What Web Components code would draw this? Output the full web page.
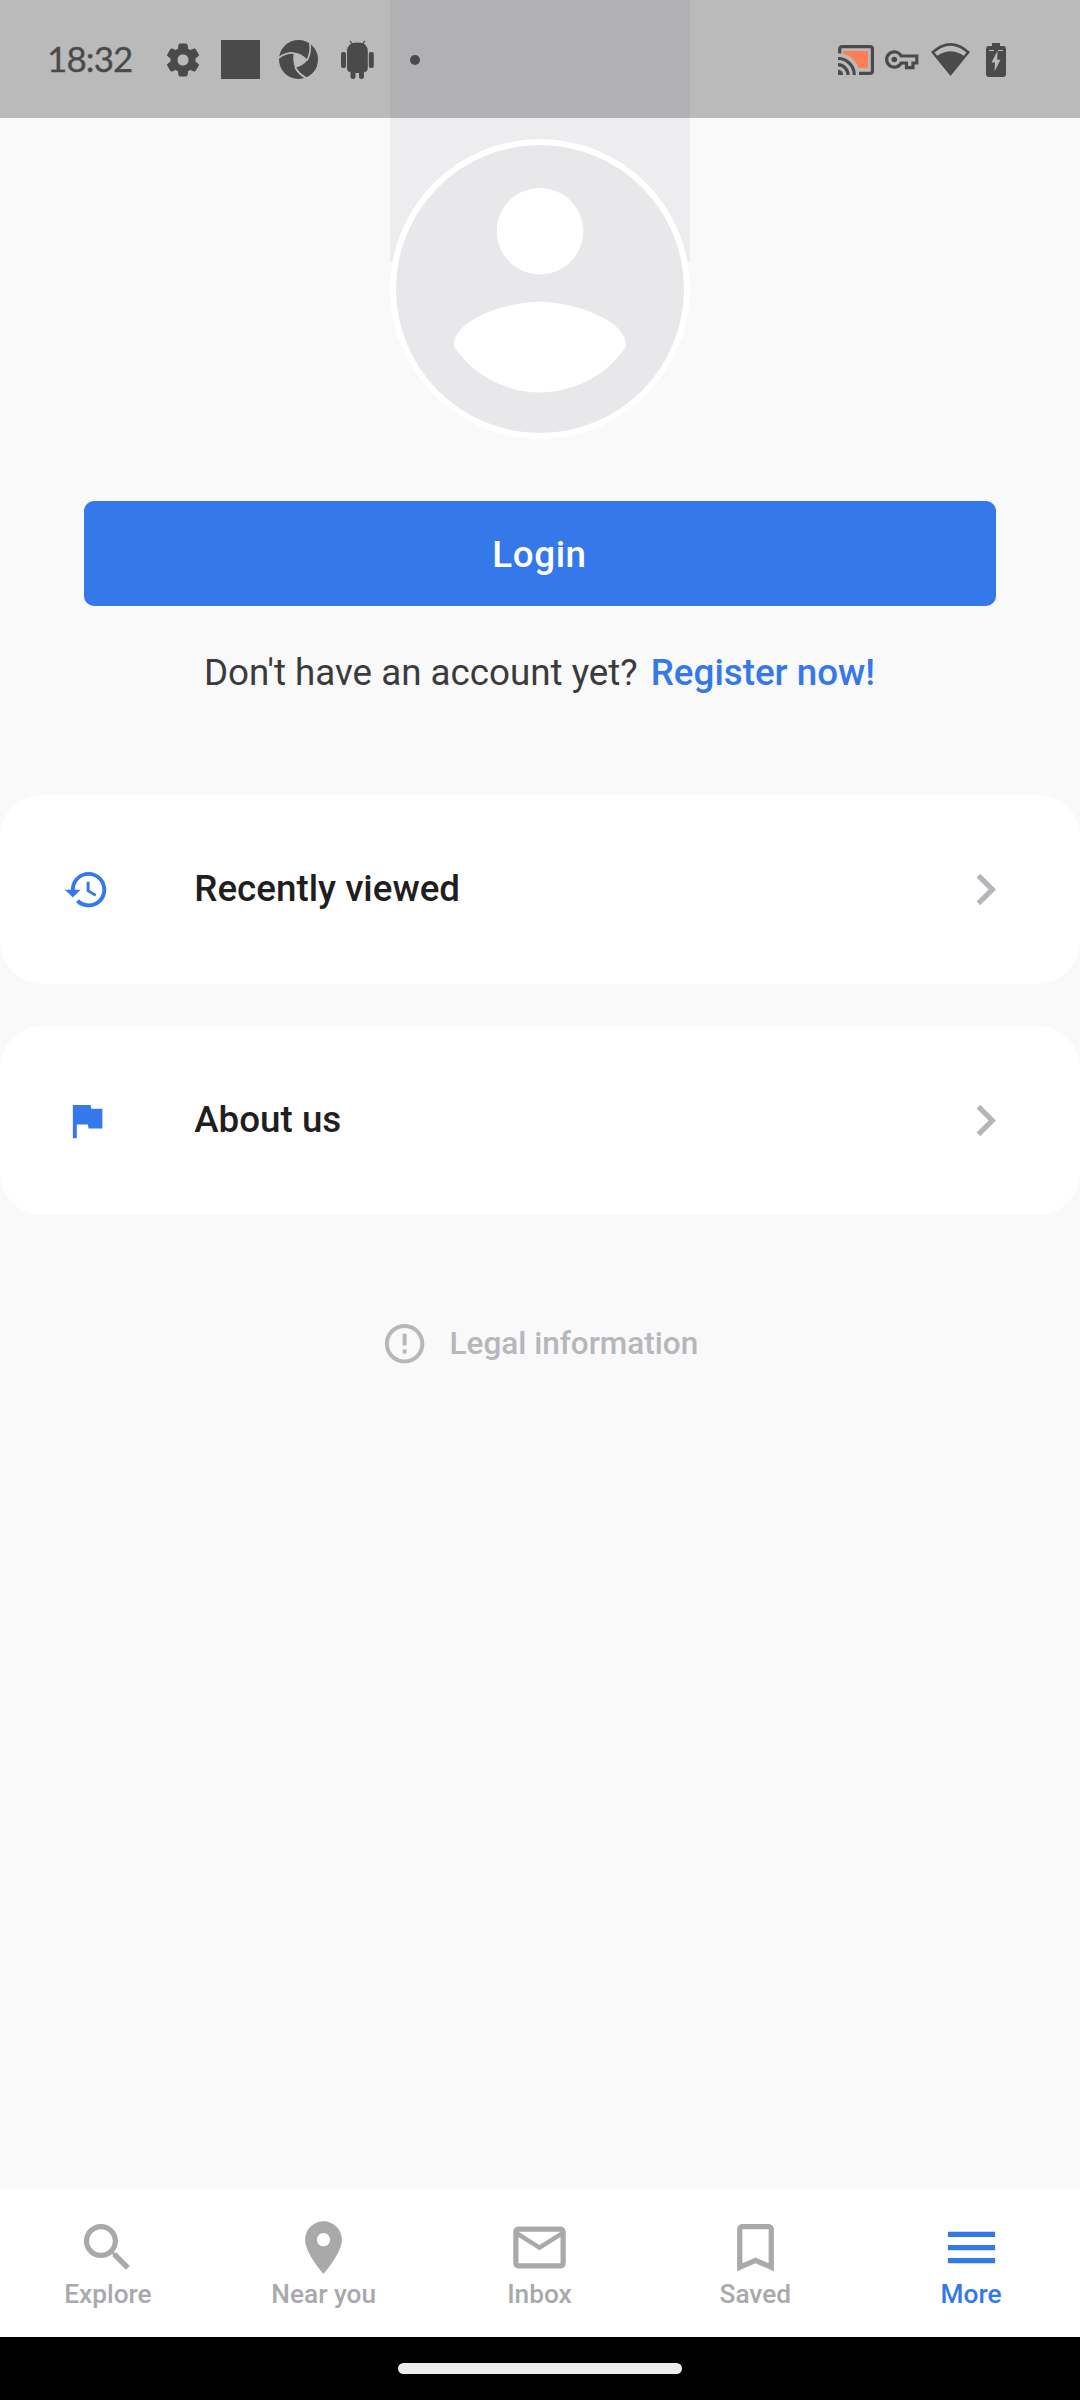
<!DOCTYPE html>
<html lang="en">
<head>
<meta charset="utf-8">
<meta name="viewport" content="width=device-width">
<title>More</title>
<style>
    html, body {
        margin: 0;
        padding: 0;
    }
    body {
        background: #f9f9f9;
        font-family: Roboto, "Liberation Sans", sans-serif;
    }
</style>
</head>
<body>
<more-screen></more-screen>

<script>
const ICONS = {
    history: '<path d="M13 3c-4.97 0-9 4.03-9 9H1l3.89 3.89.07.14L9 12H6c0-3.87 3.13-7 7-7s7 3.13 7 7-3.13 7-7 7c-1.93 0-3.68-.79-4.94-2.06l-1.42 1.42C8.27 19.99 10.51 21 13 21c4.97 0 9-4.03 9-9s-4.03-9-9-9zm-1 5v5l4.28 2.54.72-1.21-3.5-2.08V8H12z"/>',
    flag: '<path d="M14.4 6L14 4H5v17h2v-7h5.6l.4 2h7V6z"/>',
    chevron: '<path d="M10 6L8.59 7.41 13.17 12l-4.58 4.59L10 18l6-6z"/>',
    info: '<path d="M11 15h2v2h-2zm0-8h2v6h-2zm.99-5C6.47 2 2 6.48 2 12s4.47 10 9.99 10C17.52 22 22 17.52 22 12S17.52 2 11.99 2zM12 20c-4.42 0-8-3.58-8-8s3.58-8 8-8 8 3.58 8 8-3.58 8-8 8z"/>',
    search: '<path d="M15.5 14h-.79l-.28-.27C15.41 12.59 16 11.11 16 9.5 16 5.91 13.09 3 9.5 3S3 5.91 3 9.5 5.91 16 9.5 16c1.61 0 3.09-.59 4.23-1.57l.27.28v.79l5 4.99L20.49 19l-4.99-5zm-6 0C7.01 14 5 11.99 5 9.5S7.01 5 9.5 5 14 7.01 14 9.5 11.99 14 9.5 14z"/>',
    place: '<path d="M12 2C8.13 2 5 5.13 5 9c0 5.25 7 13 7 13s7-7.75 7-13c0-3.87-3.13-7-7-7zm0 9.5c-1.38 0-2.5-1.12-2.5-2.5s1.12-2.5 2.5-2.5 2.5 1.12 2.5 2.5-1.12 2.5-2.5 2.5z"/>',
    mail: '<path d="M22 6c0-1.1-.9-2-2-2H4c-1.1 0-2 .9-2 2v12c0 1.1.9 2 2 2h16c1.1 0 2-.9 2-2V6zm-2 0l-8 5-8-5h16zm0 12H4V8l8 5 8-5v10z"/>',
    bookmark: '<path d="M17 3H7c-1.1 0-1.99.9-1.99 2L5 21l7-3 7 3V5c0-1.1-.9-2-2-2zm0 15l-5-2.18L7 18V5h10v13z"/>',
    menu: '<path d="M3 18h18v-2H3v2zm0-5h18v-2H3v2zm0-7v2h18V6H3z"/>',
    settings: '<path stroke="currentColor" stroke-width=".6" d="M19.14 12.94c.04-.3.06-.61.06-.94 0-.32-.02-.64-.07-.94l2.03-1.58c.18-.14.23-.41.12-.61l-1.92-3.32c-.12-.22-.37-.29-.59-.22l-2.39.96c-.5-.38-1.03-.7-1.62-.94l-.36-2.54c-.04-.24-.24-.41-.48-.41h-3.84c-.24 0-.43.17-.47.41l-.36 2.54c-.59.24-1.13.57-1.62.94l-2.39-.96c-.22-.08-.47 0-.59.22L2.74 8.87c-.12.21-.08.47.12.61l2.03 1.58c-.05.3-.09.63-.09.94s.02.64.07.94l-2.03 1.58c-.18.14-.23.41-.12.61l1.92 3.32c.12.22.37.29.59.22l2.39-.96c.5.38 1.03.7 1.62.94l.36 2.54c.05.24.24.41.48.41h3.84c.24 0 .44-.17.47-.41l.36-2.54c.59-.24 1.13-.56 1.62-.94l2.39.96c.22.08.47 0 .59-.22l1.92-3.32c.12-.22.07-.47-.12-.61l-2.01-1.58zM12 15.6c-1.98 0-3.6-1.62-3.6-3.6s1.62-3.6 3.6-3.6 3.6 1.62 3.6 3.6-1.62 3.6-3.6 3.6z"/>'
};

class AppIcon extends HTMLElement {
    constructor() {
        super();
        this.attachShadow({ mode: 'open' });
    }

    connectedCallback() {
        this.shadowRoot.innerHTML = `
            <style>
                :host { display: block; flex: none; width: var(--icon-size, 63px); height: var(--icon-size, 63px); }
                svg { display: block; width: 100%; height: 100%; fill: currentColor; }
            </style>
            <svg viewBox="0 0 24 24">${ICONS[this.getAttribute('name')] || ''}</svg>
        `;
    }
}

class StatusBar extends HTMLElement {
    constructor() {
        super();
        this.attachShadow({ mode: 'open' });
        this.shadowRoot.innerHTML = `
            <style>
                :host {
                    display: flex;
                    justify-content: space-between;
                    align-items: center;
                    box-sizing: border-box;
                    height: 118px;
                    padding: 1px 74px 0 47px;
                    background: rgba(0, 0, 0, .25);
                    color: #4a4a4a;
                }
                .group { display: flex; align-items: center; }
                .time { width: 116px; padding-bottom: 3px; font: 400 35px/42px Lato, Roboto, sans-serif; letter-spacing: -.9px; white-space: nowrap; -webkit-text-stroke: .3px currentColor; }
                svg { display: block; fill: currentColor; }
                app-icon { --icon-size: 40px; }
                .square { width: 39px; height: 39px; margin: 0 19px 0 18px; background: currentColor; }
                .droid { margin: 0 36px 0 23px; }
                .dot { width: 10px; height: 10px; border-radius: 50%; background: currentColor; }
            </style>
            <div class="group">
                <span class="time">18:32</span>
                <app-icon name="settings"></app-icon>
                <div class="square"></div>
                <svg width="39" height="39" viewBox="0 0 39 39">
                    <circle cx="19.5" cy="19.5" r="19.5"/>
                    <g fill="none" stroke="#bbb" stroke-width="1.7">
                        <path d="M-1 18.5Q6 12.5 15 13"/>
                        <path d="M30.8 3Q32.5 12 28 20.5"/>
                        <path d="M16 27Q20 35 30 39.5"/>
                    </g>
                    <path fill="#bbb" d="M14.8 12.6Q23 13.5 28.6 20Q23.5 26.5 16 27.5Q13.2 20 14.8 12.6z"/>
                    <path fill="#bbb" d="M26 40l3-2.6 10-7v9z"/>
                    <path d="M28 36Q36 32.5 38.2 25L37 24 26 34z"/>
                </svg>
                <svg class="droid" width="33" height="39" viewBox="0 0 33 39">
                    <path d="M6 11.5Q6 2.5 16.4 2.5T26.8 11.5V28Q26.8 32 23 32V37Q23 39 20.5 39T18 37V33H14.5V37Q14.5 39 12 39T9.5 37V32Q6 32 6 28z"/>
                    <rect x="0" y="12" width="5" height="16" rx="2"/>
                    <rect x="27.8" y="12" width="5" height="16" rx="2"/>
                    <path fill="none" stroke="currentColor" stroke-width="1.2" d="M9 .8l3 4M24 .8l-3 4"/>
                </svg>
                <div class="dot"></div>
            </div>
            <div class="group">
                <svg width="36" height="30" viewBox="0 0 36 30">
                    <path fill="#ff7d55" d="M5 6H30V23H20.5Q17 12 5 8.5z"/>
                    <g fill="none" stroke="currentColor" stroke-width="3.2">
                        <path d="M1.7 8.5V4Q1.7 1.7 4 1.7H32Q34.4 1.7 34.4 4V26Q34.4 28.3 32 28.3H21"/>
                        <path d="M0 13.5A16.4 16.4 0 0 1 16.3 30"/>
                        <path d="M0 19.7A10.3 10.3 0 0 1 10 30"/>
                    </g>
                    <path d="M0 24.5A5.5 5.5 0 0 1 5.2 30H0z"/>
                </svg>
                <svg style="margin: 0 12px 0 11px" width="34" height="20" viewBox="0 0 34 20">
                    <path fill="none" stroke="currentColor" stroke-width="3.2" d="M16.2 6A7.7 7.7 0 1 0 16.2 13H21.5V17.6H28V13H31.8V6z"/>
                    <circle cx="9.3" cy="9.5" r="2.8"/>
                </svg>
                <svg width="39" height="33" viewBox="0 0 39 33">
                    <path d="M0 9Q19.5-9 39 9L19.5 33z"/>
                    <path fill="#bbb" d="M3.5 9.5Q19.5-3.8 35.5 9.5L32.8 12.8Q19.5 3.8 6.2 12.8z"/>
                </svg>
                <svg style="margin-left: 16px" width="20" height="34" viewBox="0 0 20 34">
                    <path d="M6 0h8v3h3q3 0 3 3v25q0 3-3 3H3q-3 0-3-3V6q0-3 3-3h3z"/>
                    <path fill="#bbb" d="M3 7h5v1H3zm9 0h5v1h-5zM11.5 8L5.5 19.5h3.5L8.5 28.5 14.5 16.8h-3.3z"/>
                </svg>
            </div>
        `;
    }
}

class ProfileAvatar extends HTMLElement {
    constructor() {
        super();
        this.attachShadow({ mode: 'open' });
        this.shadowRoot.innerHTML = `
            <style>
                :host { display: block; width: 300px; height: 439px; margin: 0 auto; }
                /* tinted strip behind the upper half of the circle */
                .strip {
                    display: flex;
                    align-items: flex-end;
                    box-sizing: border-box;
                    height: 289px;
                    background: linear-gradient(#ededef, #ededef) top / 100% 262px no-repeat;
                }
                svg { display: block; flex: none; margin-bottom: -150px; }
            </style>
            <div class="strip">
                <svg width="300" height="300" viewBox="0 0 300 300">
                    <circle cx="150" cy="150" r="150" fill="#fff"/>
                    <circle cx="150" cy="150" r="144" fill="#e8e8ea"/>
                    <path fill="#fff" transform="translate(-22.8 -23) scale(14.4)" d="M12 5c1.66 0 3 1.34 3 3s-1.34 3-3 3-3-1.34-3-3 1.34-3 3-3zm0 14.2c-2.5 0-4.71-1.28-6-3.22.03-1.99 4-3.08 6-3.08 1.99 0 5.97 1.09 6 3.08-1.29 1.94-3.5 3.22-6 3.22z"/>
                </svg>
            </div>
        `;
    }
}

class LoginPanel extends HTMLElement {
    constructor() {
        super();
        this.attachShadow({ mode: 'open' });
        this.shadowRoot.innerHTML = `
            <style>
                :host { display: block; padding: 62px 84px 0; font-size: 36.75px; line-height: 44px; }
                button {
                    display: block;
                    width: 100%;
                    height: 105px;
                    padding: 2px 1px 0 0;
                    border: 0;
                    border-radius: 10px;
                    background: #3478ea;
                    color: #fff;
                    font: inherit;
                    font-weight: 500;
                    letter-spacing: .6px;
                }
                p {
                    display: flex;
                    justify-content: center;
                    gap: 13px;
                    margin: 45px 1px 0 0;
                    color: #3b3b3d;
                    white-space: nowrap;
                }
                a { color: #3478ea; font-weight: 500; }
            </style>
            <button>Login</button>
            <p><span>Don't have an account yet?</span><a>Register now!</a></p>
        `;
    }
}

class MenuRow extends HTMLElement {
    constructor() {
        super();
        this.attachShadow({ mode: 'open' });
    }

    connectedCallback() {
        this.shadowRoot.innerHTML = `
            <style>
                :host {
                    display: flex;
                    align-items: center;
                    box-sizing: border-box;
                    height: 189px;
                    padding: 0 63px;
                    border-radius: 42px;
                    background: #fff;
                    color: #1f1f21;
                    font-size: 36.75px;
                    font-weight: 500;
                    line-height: 44px;
                }
                .lead { --icon-size: 47.25px; margin-top: 1px; color: #3478ea; }
                .label { flex: 1; margin-left: 84px; }
                .arrow { color: #b5b5ba; }
            </style>
            <app-icon class="lead" name="${this.getAttribute('icon')}"></app-icon>
            <div class="label"><slot></slot></div>
            <app-icon class="arrow" name="chevron"></app-icon>
        `;
    }
}

class LegalLink extends HTMLElement {
    constructor() {
        super();
        this.attachShadow({ mode: 'open' });
        this.shadowRoot.innerHTML = `
            <style>
                :host {
                    display: flex;
                    justify-content: center;
                    align-items: center;
                    gap: 21.5px;
                    padding-right: 1px;
                    color: #b6b6bb;
                    font-size: 31.5px;
                    font-weight: 500;
                    line-height: 38px;
                }
                app-icon { --icon-size: 47.25px; }
                span { padding-top: 1px; }
            </style>
            <app-icon name="info"></app-icon>
            <span><slot></slot></span>
        `;
    }
}

class NavItem extends HTMLElement {
    constructor() {
        super();
        this.attachShadow({ mode: 'open' });
    }

    connectedCallback() {
        this.shadowRoot.innerHTML = `
            <style>
                :host {
                    display: flex;
                    flex-direction: column;
                    align-items: center;
                    padding-top: 26px;
                    color: #a9a9ac;
                    font-size: 26.25px;
                    font-weight: 500;
                    line-height: 30px;
                }
                :host([active]) { color: #3478ea; }
            </style>
            <app-icon name="${this.getAttribute('icon')}"></app-icon>
            <span><slot></slot></span>
        `;
    }
}

class BottomNav extends HTMLElement {
    constructor() {
        super();
        this.attachShadow({ mode: 'open' });
        this.shadowRoot.innerHTML = `
            <style>
                :host { display: block; }
                nav { display: grid; grid-template-columns: repeat(5, 1fr); box-sizing: border-box; height: 147px; padding-right: 1px; background: #fff; }
                .gesture { display: flex; justify-content: center; align-items: flex-start; box-sizing: border-box; height: 63px; padding-top: 26px; background: #000; }
                .pill { width: 284px; height: 11px; border-radius: 6px; background: #ececec; }
            </style>
            <nav><slot></slot></nav>
            <div class="gesture"><div class="pill"></div></div>
        `;
    }
}

class MoreScreen extends HTMLElement {
    constructor() {
        super();
        this.attachShadow({ mode: 'open' });
        this.shadowRoot.innerHTML = `
            <style>
                :host {
                    position: relative;
                    display: flex;
                    flex-direction: column;
                    width: 1080px;
                    height: 2400px;
                    overflow: hidden;
                    background: #f9f9f9;
                }
                status-bar { position: absolute; top: 0; left: 0; right: 0; }
                main { flex: 1; }
                .rows { display: flex; flex-direction: column; gap: 42px; margin-top: 99.5px; }
                legal-link { margin-top: 105px; }
            </style>
            <main>
                <profile-avatar></profile-avatar>
                <login-panel></login-panel>
                <div class="rows">
                    <menu-row icon="history">Recently viewed</menu-row>
                    <menu-row icon="flag">About us</menu-row>
                </div>
                <legal-link>Legal information</legal-link>
            </main>
            <bottom-nav>
                <nav-item icon="search">Explore</nav-item>
                <nav-item icon="place">Near you</nav-item>
                <nav-item icon="mail">Inbox</nav-item>
                <nav-item icon="bookmark">Saved</nav-item>
                <nav-item icon="menu" active>More</nav-item>
            </bottom-nav>
            <status-bar></status-bar>
        `;
    }
}

customElements.define('app-icon', AppIcon);
customElements.define('status-bar', StatusBar);
customElements.define('profile-avatar', ProfileAvatar);
customElements.define('login-panel', LoginPanel);
customElements.define('menu-row', MenuRow);
customElements.define('legal-link', LegalLink);
customElements.define('nav-item', NavItem);
customElements.define('bottom-nav', BottomNav);
customElements.define('more-screen', MoreScreen);
</script>
</body>
</html>
